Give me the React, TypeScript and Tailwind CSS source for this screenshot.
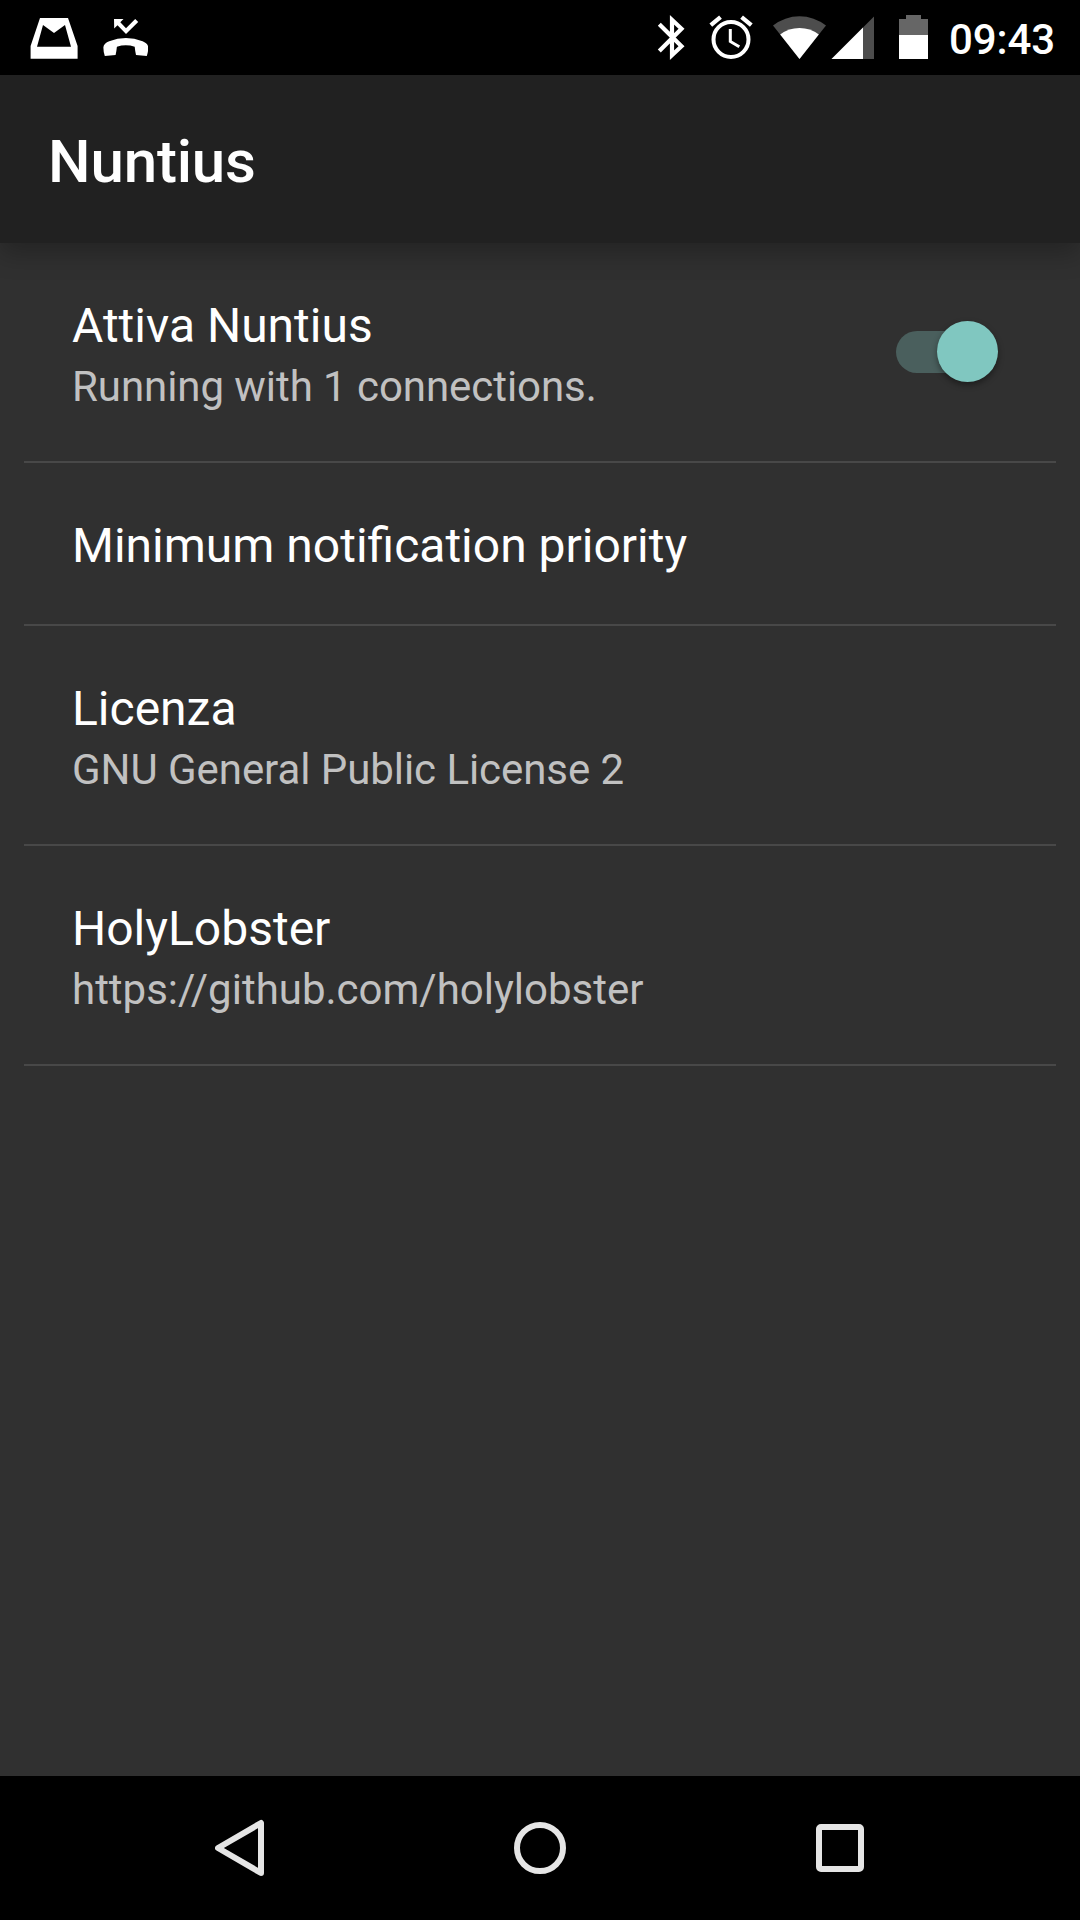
import React from "react";

const items = [
  { title: "Attiva Nuntius", summary: "Running with 1 connections.", toggle: true },
  { title: "Minimum notification priority" },
  { title: "Licenza", summary: "GNU General Public License 2" },
  { title: "HolyLobster", summary: "https://github.com/holylobster" },
];

function StatusBar() {
  return (
    <div className="flex h-[75px] items-center justify-between bg-black pr-[25px] pl-[30px]">
      <div className="flex items-center gap-6">
        <svg width="48" height="75" viewBox="30 0 48 75" fill="#fff">
          <path
            fillRule="evenodd"
            d="M40 18H68l9.600 28v12.700H30.600V46zM43 25L37 46.800h34L65 25L54 33z"
          />
        </svg>
        <svg width="46" height="75" viewBox="102 0 46 75" fill="#fff">
          <path d="M114 19h9.500l-3.200 3.300l5.700 5.900l9.200-9.200l3 3L126 34L117.500 25.200L114.200 28.500z" />
          <path d="M104.800 55.900q-1.500-4-1.400-8.600c0-2.700 2.600-4.800 5.800-6.100a48 48 0 0 1 33.400 0c3.200 1.300 5.600 3.400 5.600 6.100q.1 4.600-1.400 8.600l-10.800-.8q-.9-4.200-1.300-8.300q-8.800-2.900-17.800 0q-.4 4.100-1.300 8.300z" />
        </svg>
      </div>
      <div className="flex items-center">
        <svg width="28" height="75" viewBox="657 0 28 75" fill="none" stroke="#fff" strokeWidth="4.200">
          <path d="M659.300 24.300L681.500 46.300L672 55.200V19.800L681.500 28.700L659.300 50.900" />
        </svg>
        <svg className="ml-6" width="44" height="75" viewBox="709 0 44 75" fill="none" stroke="#fff">
          <circle cx="731" cy="39.500" r="17.500" strokeWidth="4" />
          <path d="M730.300 29v12.500l9 5.300" strokeWidth="3" />
          <path d="M710.800 25.200l9.700-8M751.300 25.200l-9.700-8" strokeWidth="4.300" />
        </svg>
        <svg className="ml-5" width="53" height="75" viewBox="773 0 53 75">
          <path d="M773 25.500a43 43 0 0 1 53 0L799.500 59z" fill="#4d4d4d" />
          <path d="M780.200 34.500a32 32 0 0 1 38.600 0L799.500 59z" fill="#fff" />
        </svg>
        <svg className="ml-[5px]" width="43" height="75" viewBox="831 0 43 75">
          <path d="M874 16.500V59H831.500z" fill="#4d4d4d" />
          <path d="M863 27.500V59H831.500z" fill="#fff" />
        </svg>
        <svg className="ml-[25px]" width="29" height="75" viewBox="899 0 29 75">
          <path d="M899 19h7v-4h15v4h7v16h-29z" fill="#666" />
          <path d="M899 35h29v24h-29z" fill="#fff" />
        </svg>
        <span className="ml-[21px] w-[106px] pt-1 text-[42px] leading-[50px] font-medium tracking-[-0.1px] whitespace-nowrap text-white">
          09:43
        </span>
      </div>
    </div>
  );
}

function Switch() {
  return (
    <div className="relative flex h-[62px] w-[102px] items-center">
      <div className="h-[42px] w-[86px] rounded-full bg-[#4a5f5d]" />
      <div className="absolute top-[0.3px] right-[0.3px] h-[60.5px] w-[60.5px] rounded-full bg-[#80c7c0] shadow-[0_3px_6px_rgba(0,0,0,0.4)]" />
    </div>
  );
}

export default function App() {
  return (
    <div className="flex h-[1920px] w-[1080px] flex-col overflow-hidden bg-[#303030] font-['Roboto',sans-serif]">
      <StatusBar />
      <header className="z-10 flex h-[168px] items-center bg-[#212121] pt-[6px] pl-12 shadow-[0_10px_24px_rgba(0,0,0,0.26)]">
        <h1 className="text-[60px] leading-[70px] font-medium tracking-[-0.15px] text-white">Nuntius</h1>
      </header>
      <main className="flex-1 px-6">
        {items.map((item) => (
          <div
            key={item.title}
            className={
              item.summary
                ? "flex h-[220px] items-start justify-between border-b-2 border-[#484848] pr-[58px] pl-12"
                : "flex h-[163px] items-start justify-between border-b-2 border-[#484848] pr-[58px] pl-12"
            }
          >
            <div className="pt-[51px]">
              <div className="text-[48px] leading-[64px] text-white">{item.title}</div>
              {item.summary && (
                <div
                  className={
                    item.summary.startsWith("http")
                      ? "mt-1 text-[42px] leading-[50px] text-[#c1c1c1]"
                      : "mt-1 text-[42px] leading-[50px] tracking-[-0.06px] text-[#c1c1c1]"
                  }
                >
                  {item.summary}
                </div>
              )}
            </div>
            {item.toggle && (
              <div className="pt-[78px]">
                <Switch />
              </div>
            )}
          </div>
        ))}
      </main>
      <nav className="flex h-36 items-center bg-black pl-[215px]">
        <svg className="mr-[249px]" width="50" height="58" viewBox="215 1819 50 58" fill="none" stroke="#e5e5e5" strokeWidth="6" strokeLinejoin="round">
          <path d="M261 1823V1873L218 1848z" />
        </svg>
        <svg width="52" height="52" viewBox="0 0 52 52" fill="none" stroke="#e5e5e5" strokeWidth="6">
          <circle cx="26" cy="26" r="23" />
        </svg>
        <div className="ml-[250px] h-12 w-12 rounded-[5px] border-[6px] border-[#e5e5e5]" />
      </nav>
    </div>
  );
}
